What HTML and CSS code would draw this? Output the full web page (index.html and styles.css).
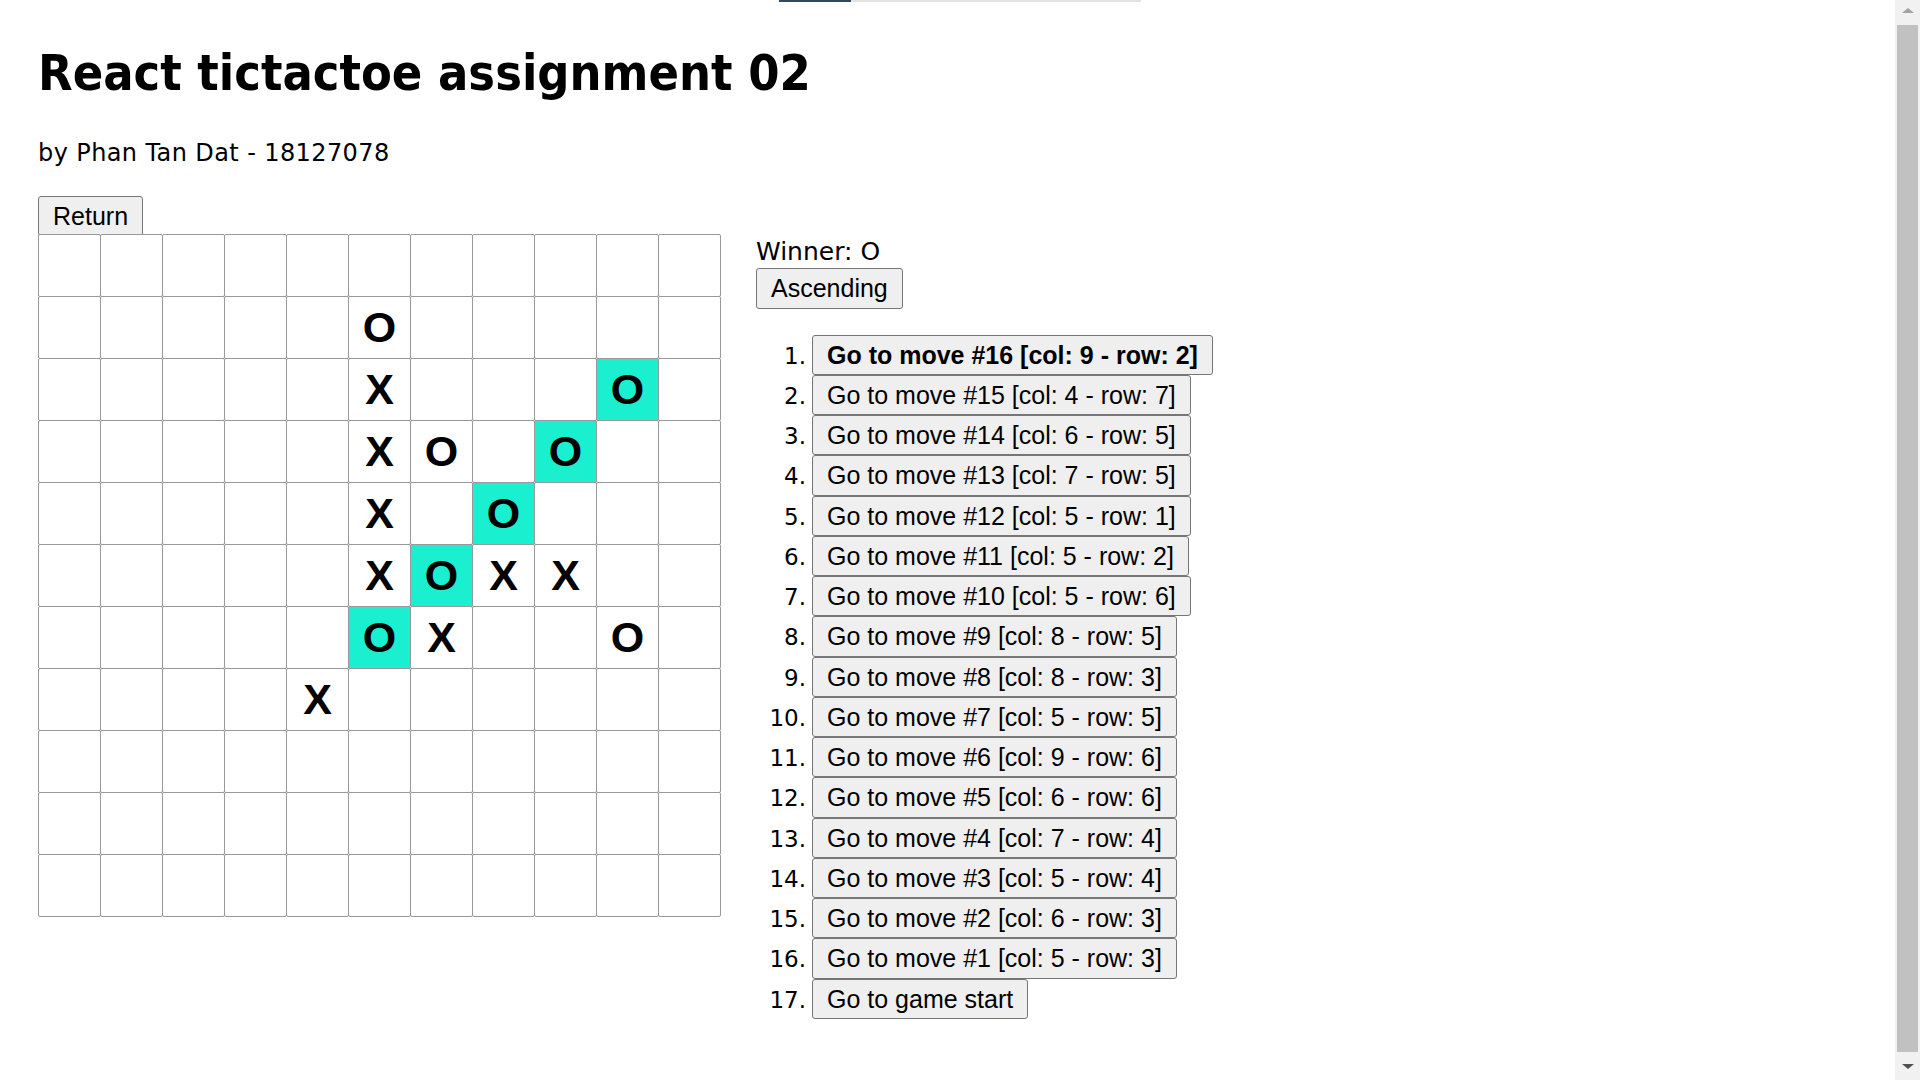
FILE: index.html
```html
<!DOCTYPE html>
<html lang="en">
<head>
<meta charset="utf-8">
<title>React tictactoe assignment 02</title>
<link rel="stylesheet" href="styles.css">
</head>
<body>
<div class="loader"><div class="loader-fill"></div></div>
<div class="app">
  <h1 class="title">React tictactoe assignment 02</h1>
  <p class="byline">by Phan Tan Dat - 18127078</p>
  <button class="btn">Return</button>
  <div class="game">
    <div class="board">
      <button class="sq"></button><button class="sq"></button><button class="sq"></button><button class="sq"></button><button class="sq"></button><button class="sq"></button><button class="sq"></button><button class="sq"></button><button class="sq"></button><button class="sq"></button><button class="sq"></button>
      <button class="sq"></button><button class="sq"></button><button class="sq"></button><button class="sq"></button><button class="sq"></button><button class="sq">O</button><button class="sq"></button><button class="sq"></button><button class="sq"></button><button class="sq"></button><button class="sq"></button>
      <button class="sq"></button><button class="sq"></button><button class="sq"></button><button class="sq"></button><button class="sq"></button><button class="sq">X</button><button class="sq"></button><button class="sq"></button><button class="sq"></button><button class="sq win">O</button><button class="sq"></button>
      <button class="sq"></button><button class="sq"></button><button class="sq"></button><button class="sq"></button><button class="sq"></button><button class="sq">X</button><button class="sq">O</button><button class="sq"></button><button class="sq win">O</button><button class="sq"></button><button class="sq"></button>
      <button class="sq"></button><button class="sq"></button><button class="sq"></button><button class="sq"></button><button class="sq"></button><button class="sq">X</button><button class="sq"></button><button class="sq win">O</button><button class="sq"></button><button class="sq"></button><button class="sq"></button>
      <button class="sq"></button><button class="sq"></button><button class="sq"></button><button class="sq"></button><button class="sq"></button><button class="sq">X</button><button class="sq win">O</button><button class="sq">X</button><button class="sq">X</button><button class="sq"></button><button class="sq"></button>
      <button class="sq"></button><button class="sq"></button><button class="sq"></button><button class="sq"></button><button class="sq"></button><button class="sq win">O</button><button class="sq">X</button><button class="sq"></button><button class="sq"></button><button class="sq">O</button><button class="sq"></button>
      <button class="sq"></button><button class="sq"></button><button class="sq"></button><button class="sq"></button><button class="sq">X</button><button class="sq"></button><button class="sq"></button><button class="sq"></button><button class="sq"></button><button class="sq"></button><button class="sq"></button>
      <button class="sq"></button><button class="sq"></button><button class="sq"></button><button class="sq"></button><button class="sq"></button><button class="sq"></button><button class="sq"></button><button class="sq"></button><button class="sq"></button><button class="sq"></button><button class="sq"></button>
      <button class="sq"></button><button class="sq"></button><button class="sq"></button><button class="sq"></button><button class="sq"></button><button class="sq"></button><button class="sq"></button><button class="sq"></button><button class="sq"></button><button class="sq"></button><button class="sq"></button>
      <button class="sq"></button><button class="sq"></button><button class="sq"></button><button class="sq"></button><button class="sq"></button><button class="sq"></button><button class="sq"></button><button class="sq"></button><button class="sq"></button><button class="sq"></button><button class="sq"></button>
    </div>
    <div class="game-info">
      <div class="status">Winner: O</div>
      <button class="btn">Ascending</button>
      <ol class="moves">
        <li><span class="idx">1.</span><button class="btn bold">Go to move #16 [col: 9 - row: 2]</button></li>
        <li><span class="idx">2.</span><button class="btn">Go to move #15 [col: 4 - row: 7]</button></li>
        <li><span class="idx">3.</span><button class="btn">Go to move #14 [col: 6 - row: 5]</button></li>
        <li><span class="idx">4.</span><button class="btn">Go to move #13 [col: 7 - row: 5]</button></li>
        <li><span class="idx">5.</span><button class="btn">Go to move #12 [col: 5 - row: 1]</button></li>
        <li><span class="idx">6.</span><button class="btn">Go to move #11 [col: 5 - row: 2]</button></li>
        <li><span class="idx">7.</span><button class="btn">Go to move #10 [col: 5 - row: 6]</button></li>
        <li><span class="idx">8.</span><button class="btn">Go to move #9 [col: 8 - row: 5]</button></li>
        <li><span class="idx">9.</span><button class="btn">Go to move #8 [col: 8 - row: 3]</button></li>
        <li><span class="idx">10.</span><button class="btn">Go to move #7 [col: 5 - row: 5]</button></li>
        <li><span class="idx">11.</span><button class="btn">Go to move #6 [col: 9 - row: 6]</button></li>
        <li><span class="idx">12.</span><button class="btn">Go to move #5 [col: 6 - row: 6]</button></li>
        <li><span class="idx">13.</span><button class="btn">Go to move #4 [col: 7 - row: 4]</button></li>
        <li><span class="idx">14.</span><button class="btn">Go to move #3 [col: 5 - row: 4]</button></li>
        <li><span class="idx">15.</span><button class="btn">Go to move #2 [col: 6 - row: 3]</button></li>
        <li><span class="idx">16.</span><button class="btn">Go to move #1 [col: 5 - row: 3]</button></li>
        <li><span class="idx">17.</span><button class="btn">Go to game start</button></li>
      </ol>
    </div>
  </div>
</div>
<div class="scrollbar" aria-hidden="true">
  <div class="sb-up"></div>
  <div class="sb-thumb"></div>
  <div class="sb-down"></div>
</div>
</body>
</html>
```

FILE: styles.css
```css
html, body {
  margin: 0;
  background: #ffffff;
}

body {
  color: #000000;
  font-family: "DejaVu Sans", sans-serif;
}

.app {
  padding: 43px 38px 0 38px;
}

.title {
  margin: 0 0 36px 0;
  font-family: "DejaVu Sans Condensed", "DejaVu Sans", sans-serif;
  font-stretch: condensed;
  font-size: 50px;
  line-height: 60px;
  font-weight: 700;
}

.byline {
  margin: 0 0 29px 0;
  font-size: 24px;
  line-height: 28px;
  letter-spacing: 0.4px;
}

.btn {
  display: block;
  width: max-content;
  margin: 0;
  padding: 4px 14px;
  border: 1px solid #767676;
  border-radius: 3px;
  background: #efefef;
  color: #000000;
  font-family: "Liberation Sans", Arial, sans-serif;
  font-size: 25px;
  line-height: 30.25px;
  font-weight: 400;
}

.btn.bold {
  font-weight: 700;
}

.game {
  display: flex;
  align-items: flex-start;
  margin-top: -2px;
}

.board {
  display: grid;
  grid-template-columns: repeat(11, 62px);
  grid-auto-rows: 62px;
  padding: 0 1px 1px 0;
}

.sq {
  width: 63px;
  height: 63px;
  margin: 0;
  padding: 0;
  border: 1px solid #999999;
  border-radius: 2px;
  background: #ffffff;
  color: #000000;
  font-family: "Liberation Sans", Arial, sans-serif;
  font-size: 43px;
  font-weight: 700;
  line-height: 61px;
  text-align: center;
}

.sq.win {
  background: #1af0d0;
}

.game-info {
  margin-left: 35px;
  padding-top: 11px;
}

.status {
  height: 23px;
  font-size: 25px;
  line-height: 14px;
}

.moves {
  margin: 26px 0 0 0;
  padding: 0;
  list-style: none;
}

.moves li {
  display: flex;
  align-items: baseline;
}

.idx {
  width: 50px;
  margin-right: 6px;
  text-align: right;
  font-size: 23px;
}

/* top loading bar overlay */
.loader {
  position: fixed;
  top: 0;
  left: 779px;
  width: 362px;
  height: 2px;
  background: #e3e3e3;
}

.loader-fill {
  width: 72px;
  height: 100%;
  background: #34495e;
}

/* scrollbar overlay */
.scrollbar {
  position: fixed;
  top: 0;
  right: 0;
  width: 25px;
  height: 100%;
  background: #f1f1f1;
  display: flex;
  flex-direction: column;
  align-items: center;
}

.sb-up {
  margin-top: 8px;
  width: 0;
  height: 0;
  border-left: 6px solid transparent;
  border-right: 6px solid transparent;
  border-bottom: 5px solid #a3a3a3;
}

.sb-thumb {
  margin-top: 12px;
  width: 21px;
  flex: 1;
  background: #c1c1c1;
}

.sb-down {
  margin: 12px 0 11px 0;
  width: 0;
  height: 0;
  border-left: 6px solid transparent;
  border-right: 6px solid transparent;
  border-top: 5px solid #505050;
}
```
